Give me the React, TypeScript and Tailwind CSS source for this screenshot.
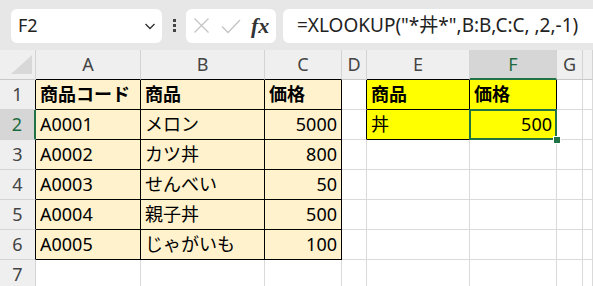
import React from 'react';

const cols = ['A', 'B', 'C', 'D', 'E', 'F', 'G', ''];

type Cell = {
  text?: string;
  bg?: string;
  bold?: boolean;
  right?: boolean;
  br?: string;
  bb?: string;
  selected?: boolean;
};

const Y = 'bg-[#ffff00]';
const T = 'bg-[#fff2cc]';
const BLK = 'border-r-black';
const BBK = 'border-b-black';

const products = [
  ['A0001', 'メロン', '5000'],
  ['A0002', 'カツ丼', '800'],
  ['A0003', 'せんべい', '50'],
  ['A0004', '親子丼', '500'],
  ['A0005', 'じゃがいも', '100'],
];

function buildRows(): Cell[][] {
  const rows: Cell[][] = [];
  // row 1
  rows.push([
    { text: '商品コード', bg: T, bold: true, br: BLK, bb: BBK },
    { text: '商品', bg: T, bold: true, br: BLK, bb: BBK },
    { text: '価格', bg: T, bold: true, br: BLK, bb: BBK },
    { br: BLK },
    { text: '商品', bg: Y, bold: true, br: BLK, bb: BBK },
    { text: '価格', bg: Y, bold: true, br: BLK, bb: BBK },
    {},
    {},
  ]);
  products.forEach((p, i) => {
    const row: Cell[] = [
      { text: p[0], bg: T, br: BLK, bb: BBK },
      { text: p[1], bg: T, br: BLK, bb: BBK },
      { text: p[2], bg: T, right: true, br: BLK, bb: BBK },
    ];
    if (i === 0) {
      row.push({ br: BLK });
      row.push({ text: '丼', bg: Y, br: BLK, bb: BBK });
      row.push({ text: '500', bg: Y, right: true, br: BLK, bb: BBK, selected: true });
    } else {
      row.push({}, {}, {});
    }
    row.push({}, {});
    rows.push(row);
  });
  rows.push([{}, {}, {}, {}, {}, {}, {}, {}]);
  return rows;
}

function NameBox() {
  return (
    <div className="ml-[11px] flex h-[34px] w-[151px] items-center justify-between rounded-[6px] bg-white pl-[7px] pr-[5px]">
      <span className="text-[18px] text-[#222]">F2</span>
      <svg width="14" height="14" viewBox="0 0 14 14" fill="none">
        <path d="M2.5 5l4.5 4.5L11.5 5" stroke="#333" strokeWidth="1.4" />
      </svg>
    </div>
  );
}

function FormulaButtons() {
  return (
    <div className="flex h-[34px] w-[90px] items-center rounded-[6px] bg-white pl-[7px]">
      <svg width="17" height="17" viewBox="0 0 17 17" fill="none">
        <path d="M1.5 1.5l14 14M15.5 1.5l-14 14" stroke="#c4c4c4" strokeWidth="1.3" />
      </svg>
      <svg className="ml-[11px]" width="20" height="16" viewBox="0 0 20 16" fill="none">
        <path d="M1 8.5l6 6L19 2" stroke="#c4c4c4" strokeWidth="1.3" />
      </svg>
      <span
        className="ml-[10px] text-[22px] font-bold italic leading-none text-[#333]"
        style={{ fontFamily: '"Liberation Serif", serif' }}
      >
        fx
      </span>
    </div>
  );
}

export default function App() {
  const rows = buildRows();
  return (
    <div
      className="relative h-[286px] w-[593px] overflow-hidden bg-white"
      style={{ fontFamily: '"Noto Sans", "Noto Sans CJK JP", sans-serif' }}
    >
      {/* formula bar */}
      <div className="flex h-[50px] items-center bg-[#e7e7e7] pt-[1px]">
        <NameBox />
        <div className="ml-[11px] mr-[10px] flex flex-col gap-[2px]">
          <span className="h-[3px] w-[3px] bg-[#444]" />
          <span className="h-[3px] w-[3px] bg-[#444]" />
          <span className="h-[3px] w-[3px] bg-[#444]" />
        </div>
        <FormulaButtons />
        <div className="ml-[7px] flex h-[34px] flex-1 items-center rounded-l-[6px] bg-white pl-[14px] text-[19px] text-[#222]">
          =XLOOKUP("*丼*",B:B,C:C, ,2,-1)
        </div>
      </div>

      {/* sheet */}
      <div className="grid grid-cols-[36px_105px_124px_77px_25px_103px_87px_26px_1fr] auto-rows-[30px]">
        {/* corner */}
        <div className="flex items-end justify-end border-b border-r border-b-[#c8c8c8] border-r-[#d4d4d4] bg-[#efefef] pb-[5px] pr-[3px]">
          <svg width="21" height="19" viewBox="0 0 21 19">
            <polygon points="21,0 21,19 0,19" fill="#d8d8d8" />
          </svg>
        </div>
        {cols.map((c, i) => {
          const sel = c === 'F';
          const under = ['A', 'B', 'C', 'E'].includes(c);
          return (
            <div
              key={i}
              className={`flex items-center justify-center border-r border-r-[#d4d4d4] text-[18px] ${
                sel
                  ? 'border-b-2 border-b-[#217346] bg-[#d6d6d6] text-[#1c6b3f]'
                  : `border-b ${under ? 'border-b-black' : 'border-b-[#c8c8c8]'} bg-[#efefef] text-[#444]`
              }`}
            >
              {c}
            </div>
          );
        })}
        {rows.map((row, ri) => {
          const n = ri + 1;
          const selRow = n === 2;
          const inTable = n <= 6;
          return (
            <React.Fragment key={n}>
              <div
                className={`flex items-center justify-center border-b border-b-[#d4d4d4] text-[18px] ${
                  selRow
                    ? 'border-r-2 border-r-[#217346] bg-[#d6d6d6] text-[#1c6b3f]'
                    : `border-r ${inTable ? 'border-r-black' : 'border-r-[#d4d4d4]'} bg-[#efefef] text-[#444]`
                }`}
              >
                {n}
              </div>
              {row.map((c, ci) => (
                <div
                  key={ci}
                  className={`relative flex items-center overflow-visible whitespace-nowrap border-b border-r px-[4px] text-[18px] text-black ${
                    c.bg ?? ''
                  } ${c.br ?? 'border-r-[#dadada]'} ${c.bb ?? 'border-b-[#dadada]'} ${
                    c.right ? 'justify-end' : ''
                  } ${c.bold ? 'font-bold' : ''}`}
                >
                  {c.text}
                  {c.selected && (
                    <>
                      <div className="absolute -left-[1px] -top-[1px] h-[31px] w-[88px] border-2 border-[#217346]" />
                      <div className="absolute -bottom-[5px] -right-[5px] z-10 h-[8px] w-[8px] border border-white bg-[#217346]" />
                    </>
                  )}
                </div>
              ))}
            </React.Fragment>
          );
        })}
      </div>
    </div>
  );
}
